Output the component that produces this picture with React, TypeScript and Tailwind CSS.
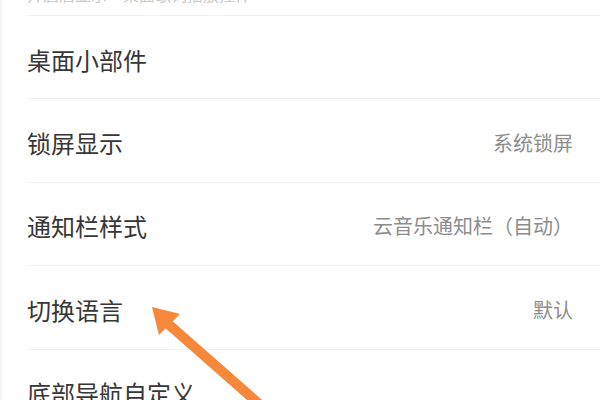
const FONT = "font-['Noto_Sans_CJK_SC','Noto_Sans',sans-serif]";

type Row = { label: string; value?: string };

const ROWS: Row[] = [
  { label: '桌面小部件' },
  { label: '锁屏显示', value: '系统锁屏' },
  { label: '通知栏样式', value: '云音乐通知栏（自动）' },
  { label: '切换语言', value: '默认' },
  { label: '底部导航自定义' },
];

export default function App() {
  return (
    <div className={`relative h-[400px] w-[600px] overflow-hidden bg-white ${FONT}`}>
      <div className="h-full border-l-2 border-[#f6f6f6] pl-[25px]">
        {/* previous item, cut off at the top */}
        <div className="h-[16px] overflow-hidden border-b border-[#f1f1f1]">
          <p className="-mt-[15px] text-[16px] leading-[19px] text-[#cacaca]">
            开启后显示　桌面歌词播放控件
          </p>
        </div>

        {ROWS.map((row) => (
          <div
            key={row.label}
            className="flex h-[83.4px] items-center justify-between border-b border-[#f1f1f1] pt-[5px] pr-[27px]"
          >
            <span className="text-[24px] text-[#363636]">{row.label}</span>
            {row.value && <span className="text-[20px] text-[#8c8c8c]">{row.value}</span>}
          </div>
        ))}
      </div>

      {/* annotation arrow */}
      <svg
        className="pointer-events-none absolute inset-0"
        width="600"
        height="400"
        viewBox="0 0 600 400"
      >
        <line x1="166" y1="322" x2="300" y2="440" stroke="#f5883b" strokeWidth="10" />
        <polygon points="152,307 180,314 159,335" fill="#f5883b" />
      </svg>
    </div>
  );
}
